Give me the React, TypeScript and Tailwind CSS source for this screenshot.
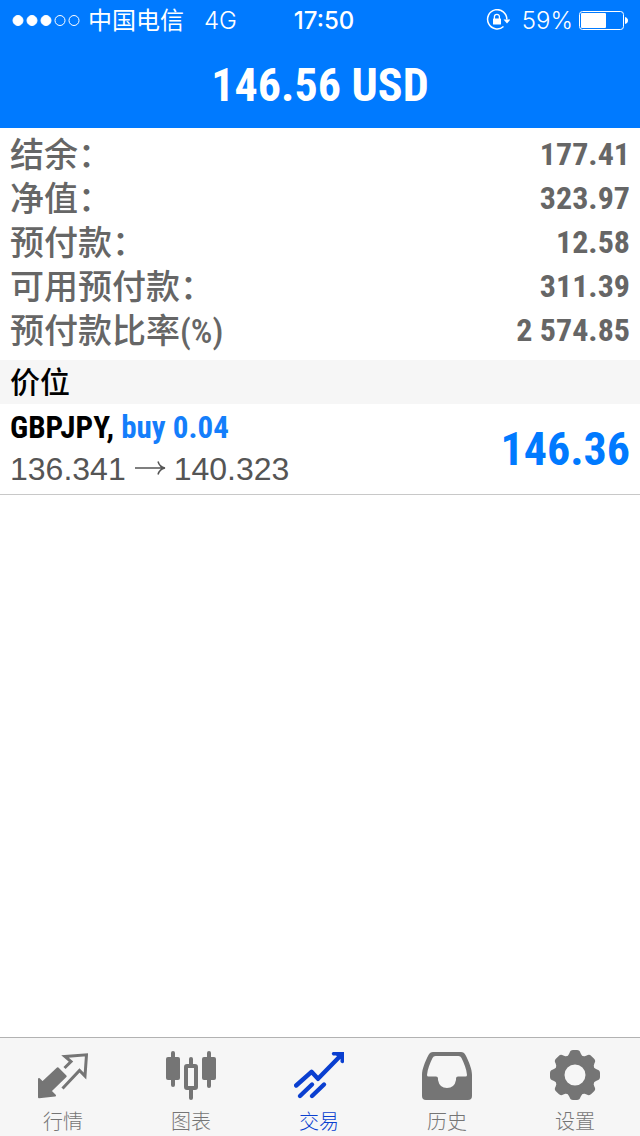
import { useState } from 'react'
import type { ReactNode } from 'react'

interface SummaryRow {
  label: string
  value: string
}

interface Tab {
  id: string
  label: string
  icon: ReactNode
}

// \uff1a is the full-width colon
const SUMMARY: SummaryRow[] = [
  { label: '结余\uff1a', value: '177.41' },
  { label: '净值\uff1a', value: '323.97' },
  { label: '预付款\uff1a', value: '12.58' },
  { label: '可用预付款\uff1a', value: '311.39' },
  { label: '预付款比率(%)', value: '2 574.85' },
]

function QuotesIcon() {
  return (
    <svg className="w-[50px] h-[50px]" viewBox="0 0 50 50" fill="none" aria-hidden="true">
      <path
        d="M1 29 4.500 32.500 19.700 18.300 27.700 26.200 12.500 41 17 45.500 1 47.200Z"
        fill="currentColor"
        stroke="currentColor"
        strokeWidth="2"
        strokeLinejoin="round"
      />
      <path
        d="M26.500 18 33 11.500 27 6.500 48.500 4.800 47 26 41.500 20.500 24.500 38.500"
        stroke="currentColor"
        strokeWidth="3"
      />
    </svg>
  )
}

function ChartIcon() {
  return (
    <svg className="w-[50px] h-[50px]" viewBox="0 0 50 50" fill="none" aria-hidden="true">
      <g fill="currentColor">
        <rect x="5" y="1" width="4" height="36" rx="2" />
        <rect x="0" y="7" width="14" height="23" rx="2" />
        <rect x="41" y="1" width="4" height="37" rx="2" />
        <rect x="36" y="7" width="14" height="23" rx="2" />
        <rect x="23" y="7" width="4" height="9" rx="2" />
        <rect x="23" y="38" width="4" height="12" rx="2" />
      </g>
      <rect x="20" y="16" width="10" height="22" rx="1" stroke="currentColor" strokeWidth="4" />
    </svg>
  )
}

function TradeIcon() {
  return (
    <svg
      className="w-[50px] h-[50px]"
      viewBox="0 0 50 50"
      fill="none"
      stroke="currentColor"
      strokeWidth="4.4"
      strokeLinecap="round"
      strokeLinejoin="round"
      aria-hidden="true"
    >
      <path d="M2.200 35.500 17.500 21.800 24 28.800 46.500 5.800" />
      <path d="M6 46 18 34.500M18 46 30 34.500" />
      <path d="M39 2H50V12Q49 14.500 46.500 12V9L42 5.500H39Q36.500 3.700 39 2Z" fill="currentColor" stroke="none" />
    </svg>
  )
}

function HistoryIcon() {
  return (
    <svg className="w-[50px] h-[50px]" viewBox="0 0 50 50" fill="none" aria-hidden="true">
      <path
        fillRule="evenodd"
        fill="currentColor"
        d="M11 2H39Q42 2 43.500 5C47 12 50 19 50 25V46Q50 50 46 50H4Q0 50 0 46V25C0 19 3 12 6.500 5Q8 2 11 2ZM13.500 6Q11.500 6 10.500 8C8 13 5.500 19 5 25Q5 26.500 6.500 26.500H14Q16 26.500 16 28.500V30Q17.500 38 25 38 32.500 38 34 30V28.500Q34 26.500 36 26.500H43.500Q45 26.500 45 25C44.500 19 42 13 39.500 8Q38.500 6 36.500 6Z"
      />
    </svg>
  )
}

function SettingsIcon() {
  return (
    <svg className="w-[50px] h-[50px]" viewBox="0 0 50 50" fill="none" aria-hidden="true">
      <circle cx="25" cy="25" r="15.500" stroke="currentColor" strokeWidth="10" />
      {[0, 45, 90, 135, 180, 225, 270, 315].map((angle) => (
        <path
          key={angle}
          d="M15.500 8Q18.500 6 19.500 3Q20.200 0 23 0H27Q29.800 0 30.500 3Q31.500 6 34.500 8L31 12H19Z"
          fill="currentColor"
          transform={`rotate(${angle} 25 25)`}
        />
      ))}
    </svg>
  )
}

const TABS: Tab[] = [
  { id: 'quotes', label: '行情', icon: <QuotesIcon /> },
  { id: 'chart', label: '图表', icon: <ChartIcon /> },
  { id: 'trade', label: '交易', icon: <TradeIcon /> },
  { id: 'history', label: '历史', icon: <HistoryIcon /> },
  { id: 'settings', label: '设置', icon: <SettingsIcon /> },
]

function StatusBar() {
  return (
    <div className="grid grid-cols-[1fr_auto_1fr] items-center h-10 pt-0.5 px-3 font-['Inter','Noto_Sans_CJK_SC',sans-serif] text-2xl leading-9">
      <div className="flex items-center">
        <svg className="w-[68px] h-3 mr-2" viewBox="0 0 68 12" aria-hidden="true">
          {[0, 1, 2, 3, 4].map((i) => (
            <circle
              key={i}
              cx={6 + i * 14}
              cy="5.500"
              r="5"
              fill={i < 3 ? 'white' : 'none'}
              stroke="white"
              strokeWidth="1"
            />
          ))}
        </svg>
        <span>中国电信</span>
        <span className="ml-5 font-light">4G</span>
      </div>
      <span className="pl-2 font-medium">17:50</span>
      <div className="flex items-center justify-end">
        {/* Rotation lock */}
        <svg className="w-6 h-6 mr-3" viewBox="0 0 24 24" fill="none" aria-hidden="true">
          <path d="M20.800 10.500A9.600 9.600 0 1 0 17.500 17.500" stroke="white" strokeWidth="1.500" />
          <path d="M17.500 10.500H24.500L21 14.500Z" fill="white" />
          <path d="M8.400 10V7.800a2.500 2.500 0 0 1 5 0V10" stroke="white" strokeWidth="1.300" />
          <rect x="7" y="9.500" width="8" height="6" rx="0.500" fill="white" />
        </svg>
        <span className="font-light">59%</span>
        <svg className="w-[49px] h-5 ml-1.5" viewBox="0 0 49 20" fill="none" aria-hidden="true">
          <rect x="0.500" y="0.500" width="44" height="18" rx="3" stroke="white" />
          <rect x="2" y="2" width="25" height="15" rx="1" fill="white" />
          <path d="M46 6Q49 7 49 9.500T46 13Z" fill="white" />
        </svg>
      </div>
    </div>
  )
}

export default function App() {
  const [active, setActive] = useState('trade')

  return (
    <div className="flex flex-col min-h-screen bg-white font-['Roboto_Condensed','Liberation_Sans','Noto_Sans_CJK_SC',sans-serif]">
      <header className="bg-[#007aff] text-white">
        <StatusBar />
        <h1 className="h-[88px] text-center text-[46px] leading-[90px] font-bold">146.56 USD</h1>
      </header>

      <main lang="zh-CN" className="flex-1">
        {/* Account summary */}
        <dl className="pt-1 pb-2 px-2.5 text-[#666]">
          {SUMMARY.map((row) => (
            <div key={row.label} className="flex justify-between">
              <dt className="pt-0.5 text-[34px] leading-[42px] font-medium">{row.label}</dt>
              <dd className="text-[32px] leading-[44px] font-bold">{row.value}</dd>
            </div>
          ))}
        </dl>

        {/* Open positions */}
        <h2 className="pt-0.5 px-2.5 bg-[#f6f6f6] text-[30px] leading-[42px] font-medium text-black">价位</h2>
        <ul>
          <li className="flex items-center justify-between px-2.5 py-1 border-b border-[#c8c8c8]">
            <div>
              <p className="text-[31px] leading-10 font-bold text-black">
                GBPJPY, <span className="text-[#147efb]">buy 0.04</span>
              </p>
              <p className="flex items-center gap-2 font-['Liberation_Sans',sans-serif] text-[32px] leading-[42px] text-[#555]">
                136.341
                <svg className="w-8 h-4" viewBox="0 0 32 16" fill="none" stroke="currentColor" strokeWidth="1.500" aria-label="to">
                  <path d="M1 7H31M24 0.500C25 4 28 6.500 31 7 28 7.500 25 10 24 13.500" />
                </svg>
                140.323
              </p>
            </div>
            <span className="text-[46px] font-bold text-[#007aff]">146.36</span>
          </li>
        </ul>
      </main>

      <nav lang="zh-CN" className="grid grid-cols-5 border-t border-[#b2b2b2] bg-[#f6f6f6]">
        {TABS.map((tab) => (
          <button
            key={tab.id}
            type="button"
            onClick={() => setActive(tab.id)}
            aria-current={active === tab.id ? 'page' : undefined}
            className={`flex flex-col items-center pt-3 pr-0.5 ${
              active === tab.id ? 'text-[#0a3fd0]' : 'text-[#757575]'
            }`}
          >
            {tab.icon}
            <span className="mt-2 text-xl leading-7 font-light">{tab.label}</span>
          </button>
        ))}
      </nav>
    </div>
  )
}
